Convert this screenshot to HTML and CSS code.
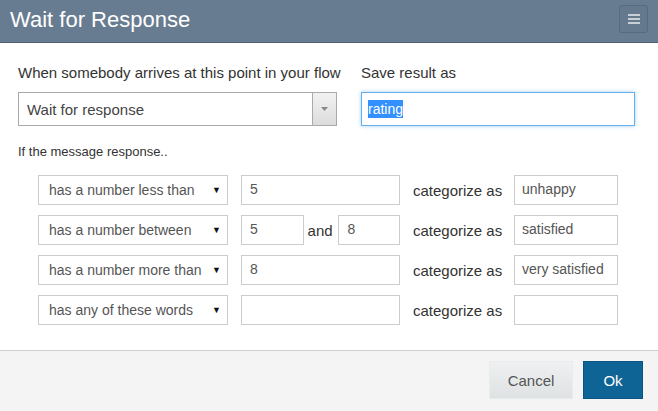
FILE: index.html
```html
<!DOCTYPE html>
<html>
<head>
<meta charset="utf-8">
<link rel="stylesheet" href="styles.css">
</head>
<body>
<div class="modal">
  <div class="header">
    <div class="title">Wait for Response</div>
    <div class="menu-btn">
      <svg width="12" height="10" viewBox="0 0 12 10"><rect x="0" y="0" width="12" height="2" fill="#c9ced4"/><rect x="0" y="4" width="12" height="2" fill="#c9ced4"/><rect x="0" y="8" width="12" height="2" fill="#c9ced4"/></svg>
    </div>
  </div>
  <div class="body">
    <div class="top">
      <div class="col-left">
        <div class="label">When somebody arrives at this point in your flow</div>
        <div class="big-select">
          <span class="big-select-text">Wait for response</span>
          <span class="big-select-arrow"><svg width="7" height="4" viewBox="0 0 7 4"><path d="M0 0H7L3.5 4Z" fill="#888"/></svg></span>
        </div>
      </div>
      <div class="col-right">
        <div class="label">Save result as</div>
        <div class="focus-input"><span class="selected">rating</span></div>
      </div>
    </div>
    <div class="sub">If the message response..</div>
    <div class="rules">
      <div class="rule">
        <div class="sel"><span>has a number less than</span><span class="caret">▼</span></div>
        <div class="inp wide">5</div>
        <div class="cat">categorize as</div>
        <div class="inp catinp">unhappy</div>
      </div>
      <div class="rule">
        <div class="sel"><span>has a number between</span><span class="caret">▼</span></div>
        <div class="pair">
          <div class="inp half">5</div>
          <span class="and">and</span>
          <div class="inp half2">8</div>
        </div>
        <div class="cat">categorize as</div>
        <div class="inp catinp">satisfied</div>
      </div>
      <div class="rule">
        <div class="sel"><span>has a number more than</span><span class="caret">▼</span></div>
        <div class="inp wide">8</div>
        <div class="cat">categorize as</div>
        <div class="inp catinp">very satisfied</div>
      </div>
      <div class="rule">
        <div class="sel"><span>has any of these words</span><span class="caret">▼</span></div>
        <div class="inp wide"></div>
        <div class="cat">categorize as</div>
        <div class="inp catinp"></div>
      </div>
    </div>
  </div>
  <div class="footer">
    <div class="btn cancel">Cancel</div>
    <div class="btn ok">Ok</div>
  </div>
</div>
</body>
</html>
```
FILE: styles.css
```css
* { box-sizing: border-box; }
html, body { margin: 0; padding: 0; }
body {
  font-family: "Liberation Sans", Arial, sans-serif;
  color: #333;
  background: #fff;
  width: 658px;
  height: 411px;
  overflow: hidden;
}
.modal { width: 658px; height: 411px; display: flex; flex-direction: column; }
.header {
  height: 43px;
  background: #687c91;
  border-bottom: 1px solid #4f6072;
  display: flex;
  align-items: center;
  justify-content: space-between;
  padding: 0 10px 0 10px;
}
.title { color: #fff; font-size: 22px; line-height: 26px; margin-top: -3px; }
.menu-btn {
  width: 29px;
  height: 28px;
  border: 1px solid #586a7c;
  border-radius: 3px;
  background: #65798e;
  display: flex;
  align-items: center;
  justify-content: center;
  margin-top: -4px;
}
.body { flex: 1; padding: 20px 23px 0 18px; }
.top { display: flex; gap: 24px; }
.col-left { width: 319px; }
.col-right { width: 274px; }
.label { font-size: 15px; line-height: 20px; margin-bottom: 9px; color: #333; white-space: nowrap; }
.big-select {
  height: 34px;
  border: 1px solid #aaa;
  display: flex;
  align-items: center;
  justify-content: space-between;
  font-size: 15px;
  color: #444;
}
.big-select-text { padding-left: 8px; }
.big-select-arrow {
  width: 24px;
  height: 100%;
  border-left: 1px solid #aaa;
  background: linear-gradient(#f2f2f2, #dcdcdc);
  display: flex;
  align-items: center;
  justify-content: center;
}
.focus-input {
  height: 34px;
  border: 1px solid #66afe9;
  box-shadow: 0 0 4px rgba(102,175,233,0.6);
  display: flex;
  align-items: center;
  padding-left: 6px;
  font-size: 14px;
}
.selected { background: #3390ff; color: #fff; line-height: 18px; }
.sub { font-size: 13px; line-height: 14px; margin-top: 19px; color: #333; }
.rules { padding-left: 20px; margin-top: 16px; display: flex; flex-direction: column; gap: 10px; }
.rule { display: flex; align-items: center; height: 30px; font-size: 14px; }
.sel {
  width: 190px;
  height: 30px;
  border: 1px solid #ccc;
  display: flex;
  align-items: center;
  justify-content: space-between;
  padding: 0 6px 0 10px;
  color: #555;
}
.caret { font-size: 9px; color: #111; }
.inp {
  height: 30px;
  border: 1px solid #ccc;
  padding: 4px 0 0 8px;
  color: #555;
  font-size: 14px;
  line-height: 18px;
}
.wide { width: 159px; margin-left: 13px; }
.pair { display: flex; align-items: center; margin-left: 13px; width: 159px; }
.half { width: 63px; }
.and { margin-left: 4px; width: 30px; color: #333; font-size: 15px; }
.half2 { width: 62px; margin-left: 1px; }
.cat { margin-left: 13px; width: 101px; color: #333; font-size: 15px; white-space: nowrap; }
.catinp { width: 104px; padding-left: 7px; }
.footer {
  height: 61px;
  border-top: 1px solid #cfcfcf;
  background: #f4f4f4;
  display: flex;
  justify-content: flex-end;
  align-items: flex-start;
  padding: 10px 15px 0 0;
  gap: 10px;
}
.btn {
  height: 38px;
  display: flex;
  align-items: center;
  justify-content: center;
  font-size: 15px;
}
.cancel {
  width: 84px;
  background: linear-gradient(#eef0f1, #dfe2e3);
  border: 1px solid #e9ebec;
  color: #555;
}
.ok {
  width: 60px;
  background: #0f6496;
  border: 1px solid #0b5582;
  color: #fff;
}
```
